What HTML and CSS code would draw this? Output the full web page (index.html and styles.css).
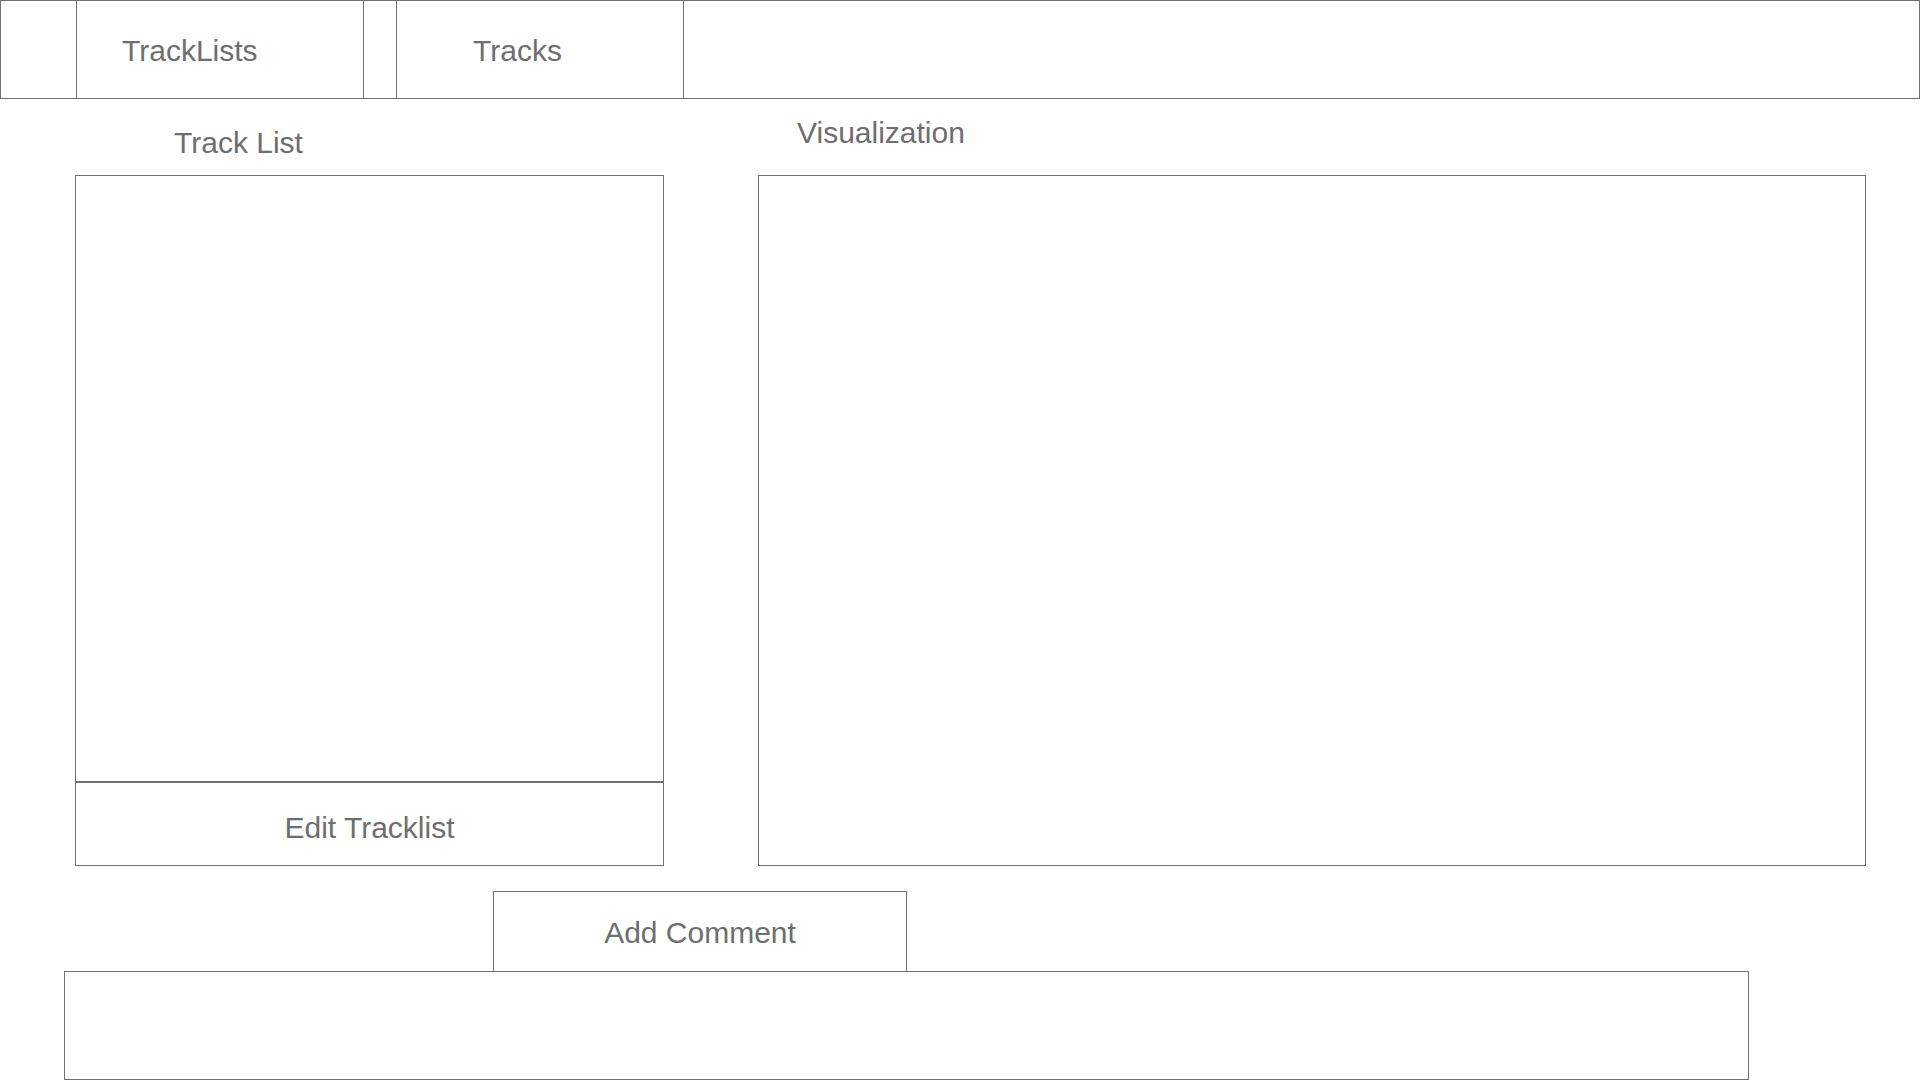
FILE: index.html
```html
<!DOCTYPE html>
<html lang="en">
<head>
<meta charset="utf-8">
<title>TrackLists</title>
<link rel="stylesheet" href="styles.css">
</head>
<body>
<header class="nav">
  <div class="cell cell-lead"></div>
  <div class="cell cell-tab cell-tracklists">TrackLists</div>
  <div class="cell cell-gap"></div>
  <div class="cell cell-tab cell-tracks">Tracks</div>
  <div class="cell cell-rest"></div>
</header>
<main class="main">
  <div class="panels">
    <section class="col col-tracklist">
      <h2 class="label label-tl">Track List</h2>
      <div class="box tl-box">
        <div class="tl-list"></div>
        <div class="tl-edit">Edit Tracklist</div>
      </div>
    </section>
    <section class="col col-viz">
      <h2 class="label label-viz">Visualization</h2>
      <div class="box viz-box"></div>
    </section>
  </div>
  <div class="comments">
    <div class="add-comment">Add Comment</div>
    <div class="comment-box"></div>
  </div>
</main>
</body>
</html>
```

FILE: styles.css
```css
html, body {
  margin: 0;
  padding: 0;
  background: #ffffff;
}

body {
  width: 1920px;
  height: 1080px;
  overflow: hidden;
  font-family: "Liberation Sans", Arial, Helvetica, sans-serif;
  color: #6e6e6e;
  font-size: 30px;
  line-height: 30px;
}

.nav {
  display: flex;
  box-sizing: border-box;
  width: 1920px;
  height: 99px;
  border: 1px solid #707070;
}

.cell {
  box-sizing: border-box;
  height: 100%;
  border-right: 1px solid #707070;
}

.cell-lead { width: 76px; }
.cell-tracklists { width: 287px; padding: 35px 0 0 45px; }
.cell-gap { width: 33px; }
.cell-tracks { width: 287px; padding: 35px 0 0 76px; }
.cell-rest { flex: 1; border-right: none; }

.main {
  display: flex;
  flex-direction: column;
}

.panels {
  display: flex;
  padding-left: 75px;
  gap: 94px;
}

.col {
  display: flex;
  flex-direction: column;
}

.col-tracklist { width: 589px; }
.col-viz { width: 1108px; }

.label {
  box-sizing: border-box;
  height: 76px;
  margin: 0;
  font-size: 30px;
  font-weight: 400;
  line-height: 30px;
}

.label-tl { padding: 29px 0 0 99px; }
.label-viz { padding: 19px 0 0 39px; }

.box {
  box-sizing: border-box;
  height: 691px;
  border: 1px solid #707070;
}

.tl-box {
  display: flex;
  flex-direction: column;
}

.tl-list { flex: 1; }

.tl-edit {
  box-sizing: border-box;
  height: 84px;
  border-top: 2px solid #707070;
  padding-top: 30px;
  text-align: center;
}

.comments {
  display: flex;
  flex-direction: column;
  padding-top: 25px;
}

.add-comment {
  box-sizing: border-box;
  width: 414px;
  height: 81px;
  margin-left: 493px;
  border: 1px solid #707070;
  padding-top: 26px;
  text-align: center;
}

.comment-box {
  box-sizing: border-box;
  width: 1685px;
  height: 109px;
  margin-left: 64px;
  margin-top: -1px;
  border: 1px solid #707070;
}
```
